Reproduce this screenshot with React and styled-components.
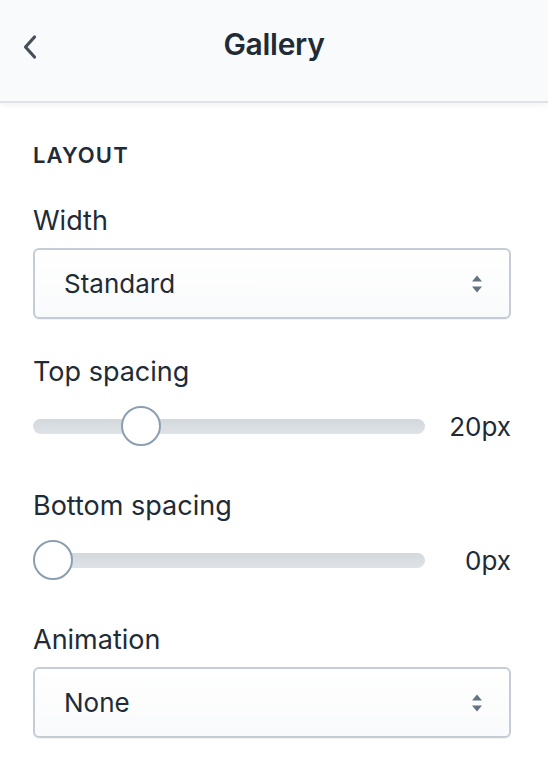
import styled, { createGlobalStyle } from 'styled-components';

const GlobalStyle = createGlobalStyle`
  html, body {
    margin: 0;
    padding: 0;
    background: #ffffff;
  }

  body {
    font-family: 'Inter', 'Liberation Sans', sans-serif;
    color: #212b36;
    -webkit-font-smoothing: antialiased;
  }
`;

const FIELDS = [
  { type: 'select', label: 'Width', value: 'Standard' },
  { type: 'range', label: 'Top spacing', value: 20, max: 80 },
  { type: 'range', label: 'Bottom spacing', value: 0, max: 80 },
  { type: 'select', label: 'Animation', value: 'None' },
];

function BackIcon() {
  return (
    <svg width="18" height="26" viewBox="0 0 18 26" fill="none">
      <path
        d="M13.5 3 L4.5 13 L13.5 23"
        stroke="#454f5b"
        strokeWidth="3.2"
        strokeLinecap="round"
        strokeLinejoin="round"
      />
    </svg>
  );
}

function SelectArrows() {
  return (
    <svg width="12" height="20" viewBox="0 0 12 20">
      <path d="M1 7.5 L6 1.5 L11 7.5 Z" fill="#637381" />
      <path d="M1 12.5 L6 18.5 L11 12.5 Z" fill="#637381" />
    </svg>
  );
}

function Slider({ value, max }) {
  const pct = (value / max) * 100;

  return (
    <SliderRow>
      <Track>
        <ThumbRail>
          <Thumb style={{ left: `${pct}%` }} />
        </ThumbRail>
      </Track>
      <Value>{value}px</Value>
    </SliderRow>
  );
}

function App() {
  return (
    <>
      <GlobalStyle />
      <Panel>
        <Header>
          <BackButton>
            <BackIcon />
          </BackButton>
          <Title>Gallery</Title>
        </Header>
        <Body>
          <SectionHeading>Layout</SectionHeading>
          <Fields>
            {FIELDS.map((field) => {
              const isSelect = field.type === 'select';
              return (
                <Field key={field.label} $gap={isSelect ? 11 : 14} $after={isSelect ? 0 : 3}>
                  <Label>{field.label}</Label>
                  {isSelect ? (
                    <Select>
                      <span>{field.value}</span>
                      <SelectArrows />
                    </Select>
                  ) : (
                    <Slider value={field.value} max={field.max} />
                  )}
                </Field>
              );
            })}
          </Fields>
        </Body>
      </Panel>
    </>
  );
}

export default App;

const Panel = styled.div`
  width: 548px;
  min-height: 774px;
  background: #ffffff;
`;

const Header = styled.header`
  position: relative;
  height: 103px;
  box-sizing: border-box;
  padding-bottom: 14px;

  display: flex;
  align-items: center;
  justify-content: center;

  background: #f9fafb;
  border-bottom: 2px solid #dfe3e8;
  box-shadow: 0 2px 6px rgba(0, 0, 0, 0.06);
`;

const BackButton = styled.button`
  position: absolute;
  left: 21px;
  top: 34px;

  display: flex;
  padding: 0;
  border: 0;
  background: transparent;
`;

const Title = styled.h1`
  margin: 0;

  font-size: 30px;
  font-weight: 600;
  letter-spacing: -0.3px;
  color: #212b36;
`;

const Body = styled.main`
  padding: 36px 37px 40px 33px;
`;

const SectionHeading = styled.h2`
  margin: 0 0 34px;

  font-size: 22px;
  line-height: 32px;
  font-weight: 600;
  letter-spacing: 1.1px;
  text-transform: uppercase;
  color: #212b36;
`;

const Fields = styled.div`
  display: flex;
  flex-direction: column;
  gap: 37px;
`;

const Field = styled.div`
  margin-bottom: ${(props) => props.$after}px;

  display: flex;
  flex-direction: column;
  gap: ${(props) => props.$gap}px;
`;

const Label = styled.label`
  font-size: 27px;
  line-height: 32px;
  color: #212b36;
`;

const Select = styled.div`
  height: 71px;
  box-sizing: border-box;
  padding: 0 26px 0 29px;

  display: flex;
  align-items: center;
  justify-content: space-between;

  border: 2px solid #c4cdd5;
  border-radius: 6px;
  background: linear-gradient(#ffffff, #f9fafb);
  box-shadow: 0 1px 0 rgba(22, 29, 37, 0.05);

  font-size: 26px;
  color: #212b36;
`;

const SliderRow = styled.div`
  height: 48px;

  display: flex;
  align-items: center;
`;

const Track = styled.div`
  flex: 1;
  height: 15px;
  padding: 0 20px;

  display: flex;
  align-items: center;

  border-radius: 8px;
  background: linear-gradient(#d3d8dd, #dfe3e8);
`;

const ThumbRail = styled.div`
  position: relative;
  flex: 1;
  height: 100%;
`;

const Thumb = styled.span`
  position: absolute;
  top: 50%;
  width: 40px;
  height: 40px;
  box-sizing: border-box;
  transform: translate(-50%, -50%);

  border: 2px solid #8c9fb0;
  border-radius: 50%;
  background: #ffffff;
`;

const Value = styled.span`
  width: 86px;
  text-align: right;

  font-size: 26px;
  color: #212b36;
`;
